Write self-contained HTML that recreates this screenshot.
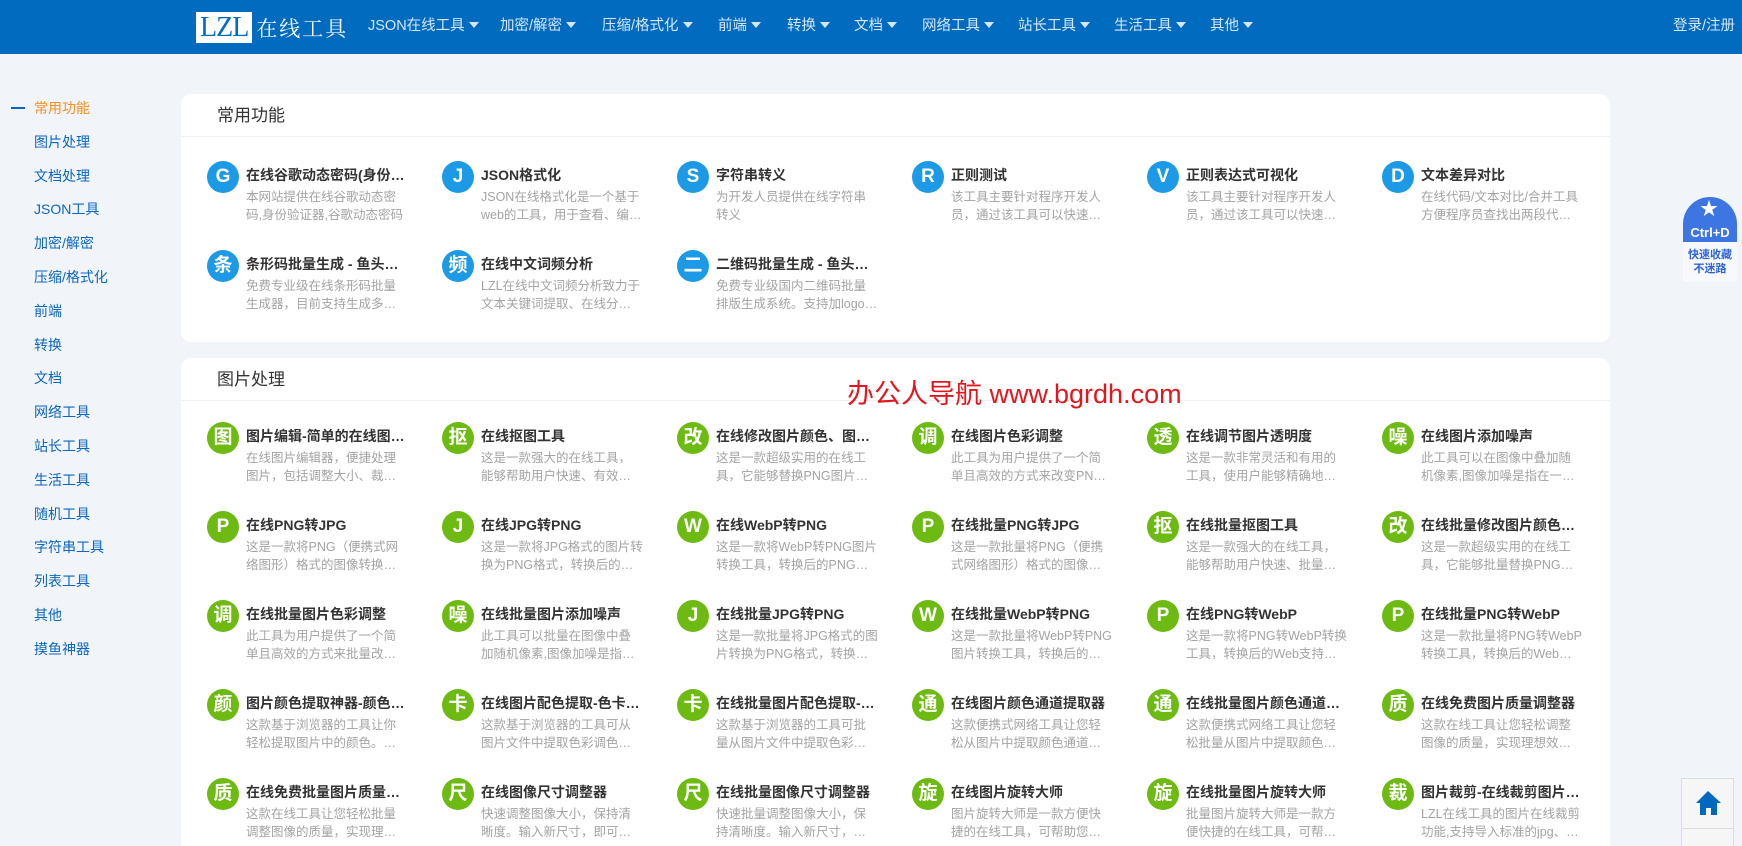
<!DOCTYPE html>
<html style="overflow:hidden;height:846px"><head><meta charset="utf-8"><style>
*{margin:0;padding:0;box-sizing:border-box}
body{width:1742px;height:846px;overflow:hidden;background:#f1f4f8;font-family:"Liberation Sans","Noto Sans CJK SC",sans-serif;position:relative}
.hd{position:absolute;left:0;top:0;width:1742px;height:54px;background:#016bc0}
.logo{position:absolute;left:196px;top:12px;height:31px;display:flex;align-items:center}
.logo .b{background:#fff;color:#016bc0;font-family:"Liberation Serif",serif;font-size:28px;height:31px;line-height:31px;padding:0 4px;letter-spacing:-1px}
.logo .t{color:#fff;font-family:"Noto Serif CJK SC",serif;font-size:21px;margin-left:4px;letter-spacing:2px}
.nav{position:absolute;top:0;height:54px;line-height:52px;color:#d6e6f7;font-size:14.5px;white-space:nowrap}
.nav:after{content:"";display:inline-block;border:5px solid transparent;border-top:6px solid #d6e6f7;border-bottom:0;margin-left:4px;vertical-align:2px}
.login{position:absolute;left:1673px;top:0;line-height:52px;color:#d6e6f7;font-size:14.5px}
.side{position:absolute;left:34px;top:97px}
.side div{height:33.8px;line-height:22px;font-size:14px;color:#0a66c2}
.side div.on{color:#f7901e}
.dash{position:absolute;left:11px;top:107px;width:14px;height:2px;background:#0a66c2}
.card{position:absolute;left:181px;width:1429px;background:#fff;border-radius:10px}
.ct{height:43px;border-bottom:1px solid #eef1f4;padding-left:36px;line-height:44px;font-size:17px;color:#333}
.grid{position:absolute;left:26px;display:grid;grid-template-columns:repeat(6,235px);grid-auto-rows:89px}
.it{position:relative}
.ic{position:absolute;left:0;top:0;width:32px;height:32px;border-radius:50%;color:#fff;font-weight:bold;font-size:19px;text-align:center;line-height:32px}
.bl{background:#1d9ae6}.gr{background:#6cba12}
.tx{margin-left:39px;width:162px;padding-top:3px}
.tt{font-size:14px;font-weight:bold;color:#333;line-height:22px;white-space:nowrap;overflow:hidden;text-overflow:ellipsis}
.ds{margin-top:2px;font-size:12.5px;color:#a3a3a3;line-height:18px;height:36px;overflow:hidden;display:-webkit-box;-webkit-line-clamp:2;-webkit-box-orient:vertical}
.wm{position:absolute;left:847px;top:372px;color:#e4161d;font-size:27px;white-space:nowrap}
.fav{position:absolute;left:1683px;top:197px;width:54px;height:85px;background:#f7f9fd;border-radius:27px 27px 0 0;overflow:hidden;text-align:center}
.fav .top{height:45px;background:#3d76e2;color:#fff;font-size:13px;font-weight:bold;padding-top:28px;line-height:16px;position:relative}
.fav .s{font-size:11px;color:#2f63d6;line-height:14px;padding-top:6px;font-weight:bold}
.home{position:absolute;left:1681px;top:778px;width:53px;height:51px;background:#f6f6f6;border:1px solid #dcdcdc}
.home2{position:absolute;left:1681px;top:828px;width:53px;height:18px;background:#f6f6f6;border:1px solid #dcdcdc;border-bottom:0}
</style></head><body>
<div class="hd">
<div class="logo"><span class="b">LZL</span><span class="t">在线工具</span></div>
<div class="nav" style="left:368px">JSON在线工具</div>
<div class="nav" style="left:500px">加密/解密</div>
<div class="nav" style="left:602px">压缩/格式化</div>
<div class="nav" style="left:718px">前端</div>
<div class="nav" style="left:787px">转换</div>
<div class="nav" style="left:854px">文档</div>
<div class="nav" style="left:922px">网络工具</div>
<div class="nav" style="left:1018px">站长工具</div>
<div class="nav" style="left:1114px">生活工具</div>
<div class="nav" style="left:1210px">其他</div>
<div class="login">登录/注册</div>
</div>
<div class="dash"></div>
<div class="side">
<div class="on">常用功能</div><div>图片处理</div><div>文档处理</div><div>JSON工具</div><div>加密/解密</div><div>压缩/格式化</div><div>前端</div><div>转换</div><div>文档</div><div>网络工具</div><div>站长工具</div><div>生活工具</div><div>随机工具</div><div>字符串工具</div><div>列表工具</div><div>其他</div><div>摸鱼神器</div>
</div>

<div class="card" style="top:94px;height:248px">
<div class="ct">常用功能</div>
<div class="grid" style="top:67px">
<div class="it"><div class="ic bl">G</div><div class="tx"><div class="tt">在线谷歌动态密码(身份验证器)</div><div class="ds">本网站提供在线谷歌动态密码,身份验证器,谷歌动态密码</div></div></div>
<div class="it"><div class="ic bl">J</div><div class="tx"><div class="tt">JSON格式化</div><div class="ds">JSON在线格式化是一个基于web的工具，用于查看、编辑和格式化</div></div></div>
<div class="it"><div class="ic bl">S</div><div class="tx"><div class="tt">字符串转义</div><div class="ds">为开发人员提供在线字符串转义</div></div></div>
<div class="it"><div class="ic bl">R</div><div class="tx"><div class="tt">正则测试</div><div class="ds">该工具主要针对程序开发人员，通过该工具可以快速准确测试</div></div></div>
<div class="it"><div class="ic bl">V</div><div class="tx"><div class="tt">正则表达式可视化</div><div class="ds">该工具主要针对程序开发人员，通过该工具可以快速准确测试</div></div></div>
<div class="it"><div class="ic bl">D</div><div class="tx"><div class="tt">文本差异对比</div><div class="ds">在线代码/文本对比/合并工具方便程序员查找出两段代码的差异</div></div></div>
<div class="it"><div class="ic bl">条</div><div class="tx"><div class="tt">条形码批量生成 - 鱼头的条形码</div><div class="ds">免费专业级在线条形码批量生成器，目前支持生成多种格式</div></div></div>
<div class="it"><div class="ic bl">频</div><div class="tx"><div class="tt">在线中文词频分析</div><div class="ds">LZL在线中文词频分析致力于文本关键词提取、在线分词、词频统计</div></div></div>
<div class="it"><div class="ic bl">二</div><div class="tx"><div class="tt">二维码批量生成 - 鱼头的二维码</div><div class="ds">免费专业级国内二维码批量排版生成系统。支持加logo，批量生成</div></div></div>
</div>
</div>

<div class="card" style="top:358px;height:488px;border-radius:10px 10px 0 0">
<div class="ct">图片处理</div>
<div class="grid" style="top:64px">
<div class="it"><div class="ic gr">图</div><div class="tx"><div class="tt">图片编辑-简单的在线图片编辑器</div><div class="ds">在线图片编辑器，便捷处理图片，包括调整大小、裁剪、旋转等</div></div></div>
<div class="it"><div class="ic gr">抠</div><div class="tx"><div class="tt">在线抠图工具</div><div class="ds">这是一款强大的在线工具，能够帮助用户快速、有效地将图片抠出</div></div></div>
<div class="it"><div class="ic gr">改</div><div class="tx"><div class="tt">在线修改图片颜色、图片换色</div><div class="ds">这是一款超级实用的在线工具，它能够替换PNG图片中的颜色</div></div></div>
<div class="it"><div class="ic gr">调</div><div class="tx"><div class="tt">在线图片色彩调整</div><div class="ds">此工具为用户提供了一个简单且高效的方式来改变PNG图片色彩</div></div></div>
<div class="it"><div class="ic gr">透</div><div class="tx"><div class="tt">在线调节图片透明度</div><div class="ds">这是一款非常灵活和有用的工具，使用户能够精确地控制透明度</div></div></div>
<div class="it"><div class="ic gr">噪</div><div class="tx"><div class="tt">在线图片添加噪声</div><div class="ds">此工具可以在图像中叠加随机像素,图像加噪是指在一幅图像中</div></div></div>
<div class="it"><div class="ic gr">P</div><div class="tx"><div class="tt">在线PNG转JPG</div><div class="ds">这是一款将PNG（便携式网络图形）格式的图像转换为JPG格式</div></div></div>
<div class="it"><div class="ic gr">J</div><div class="tx"><div class="tt">在线JPG转PNG</div><div class="ds">这是一款将JPG格式的图片转换为PNG格式，转换后的PNG图片</div></div></div>
<div class="it"><div class="ic gr">W</div><div class="tx"><div class="tt">在线WebP转PNG</div><div class="ds">这是一款将WebP转PNG图片转换工具，转换后的PNG支持透明</div></div></div>
<div class="it"><div class="ic gr">P</div><div class="tx"><div class="tt">在线批量PNG转JPG</div><div class="ds">这是一款批量将PNG（便携式网络图形）格式的图像转换为JPG</div></div></div>
<div class="it"><div class="ic gr">抠</div><div class="tx"><div class="tt">在线批量抠图工具</div><div class="ds">这是一款强大的在线工具，能够帮助用户快速、批量、有效地抠图</div></div></div>
<div class="it"><div class="ic gr">改</div><div class="tx"><div class="tt">在线批量修改图片颜色、换色</div><div class="ds">这是一款超级实用的在线工具，它能够批量替换PNG图片中的颜色</div></div></div>
<div class="it"><div class="ic gr">调</div><div class="tx"><div class="tt">在线批量图片色彩调整</div><div class="ds">此工具为用户提供了一个简单且高效的方式来批量改变PNG图片</div></div></div>
<div class="it"><div class="ic gr">噪</div><div class="tx"><div class="tt">在线批量图片添加噪声</div><div class="ds">此工具可以批量在图像中叠加随机像素,图像加噪是指在一幅图像</div></div></div>
<div class="it"><div class="ic gr">J</div><div class="tx"><div class="tt">在线批量JPG转PNG</div><div class="ds">这是一款批量将JPG格式的图片转换为PNG格式，转换后的PNG图片</div></div></div>
<div class="it"><div class="ic gr">W</div><div class="tx"><div class="tt">在线批量WebP转PNG</div><div class="ds">这是一款批量将WebP转PNG图片转换工具，转换后的PNG支持透明</div></div></div>
<div class="it"><div class="ic gr">P</div><div class="tx"><div class="tt">在线PNG转WebP</div><div class="ds">这是一款将PNG转WebP转换工具，转换后的Web支持下载保存</div></div></div>
<div class="it"><div class="ic gr">P</div><div class="tx"><div class="tt">在线批量PNG转WebP</div><div class="ds">这是一款批量将PNG转WebP转换工具，转换后的Web支持下载</div></div></div>
<div class="it"><div class="ic gr">颜</div><div class="tx"><div class="tt">图片颜色提取神器-颜色拾取器</div><div class="ds">这款基于浏览器的工具让你轻松提取图片中的颜色。上传图片即可</div></div></div>
<div class="it"><div class="ic gr">卡</div><div class="tx"><div class="tt">在线图片配色提取-色卡生成</div><div class="ds">这款基于浏览器的工具可从图片文件中提取色彩调色板。上传图片</div></div></div>
<div class="it"><div class="ic gr">卡</div><div class="tx"><div class="tt">在线批量图片配色提取-色卡生成</div><div class="ds">这款基于浏览器的工具可批量从图片文件中提取色彩调色板</div></div></div>
<div class="it"><div class="ic gr">通</div><div class="tx"><div class="tt">在线图片颜色通道提取器</div><div class="ds">这款便携式网络工具让您轻松从图片中提取颜色通道。不需要安装</div></div></div>
<div class="it"><div class="ic gr">通</div><div class="tx"><div class="tt">在线批量图片颜色通道提取器</div><div class="ds">这款便携式网络工具让您轻松批量从图片中提取颜色通道。不需要</div></div></div>
<div class="it"><div class="ic gr">质</div><div class="tx"><div class="tt">在线免费图片质量调整器</div><div class="ds">这款在线工具让您轻松调整图像的质量，实现理想效果。无需安装</div></div></div>
<div class="it"><div class="ic gr">质</div><div class="tx"><div class="tt">在线免费批量图片质量调整器</div><div class="ds">这款在线工具让您轻松批量调整图像的质量，实现理想效果。无需</div></div></div>
<div class="it"><div class="ic gr">尺</div><div class="tx"><div class="tt">在线图像尺寸调整器</div><div class="ds">快速调整图像大小，保持清晰度。输入新尺寸，即可在线调整</div></div></div>
<div class="it"><div class="ic gr">尺</div><div class="tx"><div class="tt">在线批量图像尺寸调整器</div><div class="ds">快速批量调整图像大小，保持清晰度。输入新尺寸，即可在线调整</div></div></div>
<div class="it"><div class="ic gr">旋</div><div class="tx"><div class="tt">在线图片旋转大师</div><div class="ds">图片旋转大师是一款方便快捷的在线工具，可帮助您顺时针旋转</div></div></div>
<div class="it"><div class="ic gr">旋</div><div class="tx"><div class="tt">在线批量图片旋转大师</div><div class="ds">批量图片旋转大师是一款方便快捷的在线工具，可帮助您批量旋转</div></div></div>
<div class="it"><div class="ic gr">裁</div><div class="tx"><div class="tt">图片裁剪-在线裁剪图片工具</div><div class="ds">LZL在线工具的图片在线裁剪功能,支持导入标准的jpg、png格式</div></div></div>
</div>
</div>

<div class="wm">办公人导航 www.bgrdh.com</div>

<div class="fav"><div class="top"><span style="position:absolute;left:17px;top:4px;font-size:18px">★</span>Ctrl+D</div><div class="s">快速收藏<br>不迷路</div></div>
<div class="home"><svg width="53" height="51" viewBox="0 0 53 51"><path d="M26 12 L14 24 L18 24 L18 36 L24 36 L24 29 L29 29 L29 36 L35 36 L35 24 L39 24 Z" fill="#0068be"/></svg></div>
<div class="home2"></div>
</body></html>
